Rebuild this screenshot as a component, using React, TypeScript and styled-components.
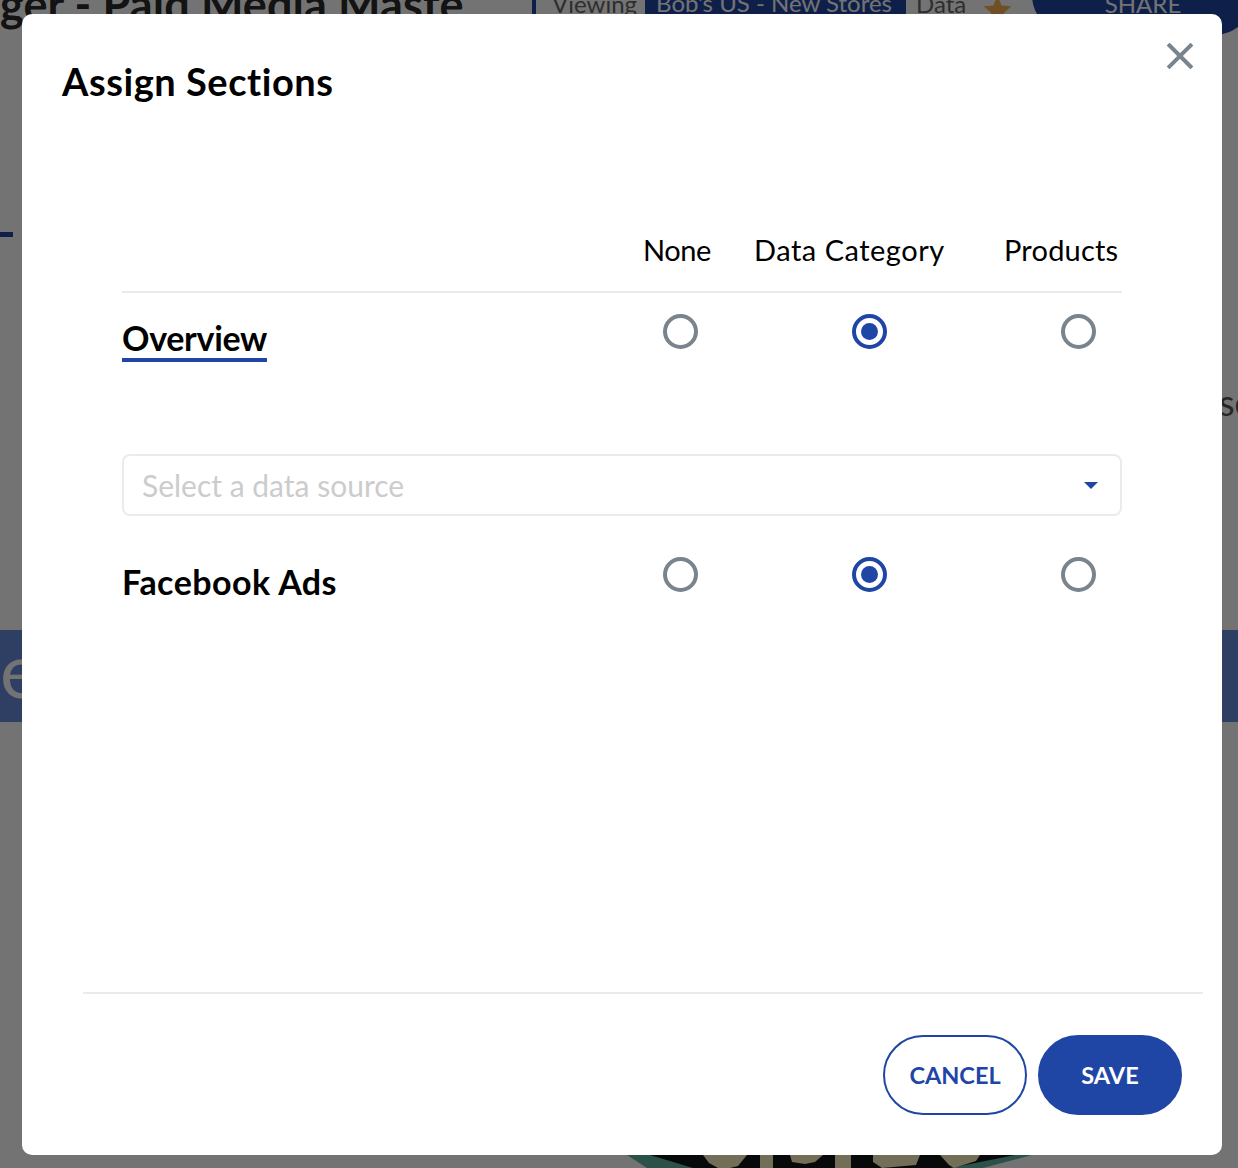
import * as React from 'react';
import styled, {createGlobalStyle} from 'styled-components';

const BLUE = '#2046a5';
const FONT = 'Lato, "Open Sans", sans-serif';

const GlobalStyle = createGlobalStyle`
  html, body {
    margin: 0;
    height: 100%;
    background: #fff;
    font-family: ${FONT};
  }
  * {
    box-sizing: border-box;
  }
`;

const Page = styled.div`
  position: relative;
  width: 1238px;
  height: 1168px;
  overflow: hidden;
  background: #fff;
`;

// what is left of the report page behind the dialog
const PageTitle = styled.div`
  position: absolute;
  left: 0;
  top: -26px;
  font-size: 45px;
  font-weight: 700;
  line-height: 60px;
  letter-spacing: 0.1px;
  color: #2a2a2a;
  white-space: nowrap;
`;

const ViewBar = styled.div`
  position: absolute;
  left: 532px;
  top: -8px;
  height: 22px;
  display: flex;
  align-items: center;
  border-left: 4px solid ${BLUE};
  padding-left: 16px;
  font-size: 24px;
  color: #666;
  white-space: nowrap;
`;

const ViewName = styled.span`
  width: 261px;
  height: 22px;
  margin: 0 10px 0 8px;
  padding-left: 11px;
  background: ${BLUE};
  color: #fff;
  line-height: 22px;
`;

const Star = styled.svg`
  width: 33px;
  height: 33px;
  margin: 13px 0 0 15px;
  fill: #f7b052;
`;

const ShareButton = styled.div`
  position: absolute;
  left: 1032px;
  top: -45px;
  width: 222px;
  height: 80px;
  border-radius: 40px;
  background: ${BLUE};
  color: #fff;
  font-size: 24px;
  padding-top: 37px;
  text-align: center;
  line-height: 24px;
`;

const TabMark = styled.div`
  position: absolute;
  left: 0;
  top: 232px;
  width: 13px;
  height: 5px;
  background: ${BLUE};
`;

const SideText = styled.div`
  position: absolute;
  left: 1219px;
  top: 382px;
  font-size: 36px;
  line-height: 40px;
  color: #555;
`;

const Banner = styled.div`
  position: absolute;
  left: 0;
  right: 0;
  top: 630px;
  height: 92px;
  background: #688cdc;
  color: #fff;
  font-size: 76px;
  line-height: 78px;
`;

const LogoPeek = styled.svg`
  position: absolute;
  left: 620px;
  top: 1155px;
  width: 420px;
  height: 13px;
`;

const Overlay = styled.div`
  position: absolute;
  inset: 0;
  background: rgba(0, 0, 0, 0.55);
`;

const Modal = styled.div`
  position: absolute;
  left: 22px;
  top: 14px;
  width: 1200px;
  height: 1141px;
  display: flex;
  flex-direction: column;
  border-radius: 10px;
  background: #fff;
`;

const Header = styled.header`
  display: flex;
  align-items: flex-start;
  justify-content: space-between;
  height: 216px;
  padding: 42px 28px 0 40px;
`;

const Title = styled.h1`
  margin: 0;
  font-size: 38px;
  font-weight: 700;
  line-height: 50px;
  letter-spacing: 0.55px;
  color: #000;
`;

const CloseButton = styled.button`
  width: 28px;
  height: 28px;
  margin-top: -14px;
  padding: 0;
  border: 0;
  background: none;
  color: #7a848c;
`;

const Body = styled.div`
  flex: 1;
  padding: 0 100px;
`;

const ColumnHeads = styled.div`
  display: grid;
  grid-template-columns: 111px 250px 1fr;
  height: 63px;
  padding-left: 521px;
  border-bottom: 2px solid #ebebeb;
  font-size: 29px;
  line-height: 40px;
  color: #000;
`;

const ColumnHead = styled.span<{$tracking: number}>`
  letter-spacing: ${p => p.$tracking}px;
`;

const SectionRow = styled.div<{$top: number}>`
  display: flex;
  align-items: flex-start;
  justify-content: space-between;
  padding-top: ${p => p.$top}px;
`;

const SectionName = styled.span<{$active?: boolean}>`
  margin-top: ${p => (p.$active ? 4 : 5)}px;
  font-size: 34px;
  font-weight: 700;
  line-height: 40px;
  letter-spacing: ${p => (p.$active ? -0.3 : 0.45)}px;
  color: #000;
  ${p => p.$active && `border-bottom: 4px solid ${BLUE};`}
`;

const RadioGroup = styled.div`
  display: grid;
  grid-template-columns: 189px 209px 35px;
  padding-right: 26px;
`;

const Radio = styled.span<{$checked?: boolean}>`
  position: relative;
  display: block;
  width: 35px;
  height: 35px;
  border-radius: 50%;
  border: 4px solid ${p => (p.$checked ? BLUE : '#7a848c')};

  &::after {
    content: '';
    display: ${p => (p.$checked ? 'block' : 'none')};
    position: absolute;
    inset: 5px;
    border-radius: 50%;
    background: ${BLUE};
  }
`;

const SelectBox = styled.div`
  display: flex;
  align-items: center;
  justify-content: space-between;
  height: 62px;
  margin-top: 92px;
  padding: 0 22px 0 18px;
  border: 2px solid #ebebeb;
  border-radius: 8px;
  font-size: 30px;
  color: #ccc;
`;

const Caret = styled.span`
  width: 0;
  height: 0;
  border-style: solid;
  border-width: 7px 7px 0 7px;
  border-color: ${BLUE} transparent transparent transparent;
`;

const Footer = styled.footer`
  display: flex;
  justify-content: flex-end;
  gap: 11px;
  height: 163px;
  margin: 0 19px 0 61px;
  padding: 41px 21px 0 0;
  border-top: 2px solid #ebebeb;
`;

const PillButton = styled.button<{$primary?: boolean}>`
  width: 144px;
  height: 80px;
  border-radius: 40px;
  border: 2px solid ${BLUE};
  background: ${p => (p.$primary ? BLUE : '#fff')};
  color: ${p => (p.$primary ? '#fff' : BLUE)};
  font-family: ${FONT};
  font-size: 23.5px;
  font-weight: 700;
`;

const Radios = () => (
  <RadioGroup>
    <Radio />
    <Radio $checked />
    <Radio />
  </RadioGroup>
);

export default function App() {
  return (
    <Page>
      <GlobalStyle />
      <PageTitle>ger - Paid Media Maste</PageTitle>
      <ViewBar>
        Viewing
        <ViewName>Bob's US - New Stores</ViewName>
        Data
        <Star viewBox="0 0 24 24">
          <path d="M12 2l3 7 7 .6-5.300 4.700 1.600 7.200L12 17.700 5.700 21.500l1.600-7.200L2 9.600 9 9z" />
        </Star>
      </ViewBar>
      <ShareButton>SHARE</ShareButton>
      <TabMark />
      <SideText>se</SideText>
      <Banner>e</Banner>
      <LogoPeek viewBox="0 0 420 13">
        <path d="M7 0H412L363 13H27z" fill="#5fb3a3" />
        <path d="M30 0H395L345 10 330 13H73z" fill="#10141a" />
        <path d="M83 0h44l-9 11-8 2H98l-9-5zM140 0h13v13h-13zM170 0h33l-8 7-10 2-13-2zM215 0h16v13h-16zM253 0h47l-4 10-34 3-9-6zM320 0h40l-4 6-22 7-5-3z" fill="#fdf3c4" />
      </LogoPeek>
      <Overlay />
      <Modal role="dialog">
        <Header>
          <Title>Assign Sections</Title>
          <CloseButton aria-label="Close">
            <svg viewBox="0 0 28 28" width="28" height="28" fill="none" stroke="currentColor" strokeWidth="4" strokeLinecap="square">
              <path d="M3.500 3.500l21 21M24.500 3.500l-21 21" />
            </svg>
          </CloseButton>
        </Header>
        <Body>
          <ColumnHeads>
            <ColumnHead $tracking={-0.4}>None</ColumnHead>
            <ColumnHead $tracking={0.5}>Data Category</ColumnHead>
            <ColumnHead $tracking={0.2}>Products</ColumnHead>
          </ColumnHeads>
          <SectionRow $top={21}>
            <SectionName $active>Overview</SectionName>
            <Radios />
          </SectionRow>
          <SelectBox>
            Select a data source
            <Caret />
          </SelectBox>
          <SectionRow $top={41}>
            <SectionName>Facebook Ads</SectionName>
            <Radios />
          </SectionRow>
        </Body>
        <Footer>
          <PillButton>CANCEL</PillButton>
          <PillButton $primary>SAVE</PillButton>
        </Footer>
      </Modal>
    </Page>
  );
}
